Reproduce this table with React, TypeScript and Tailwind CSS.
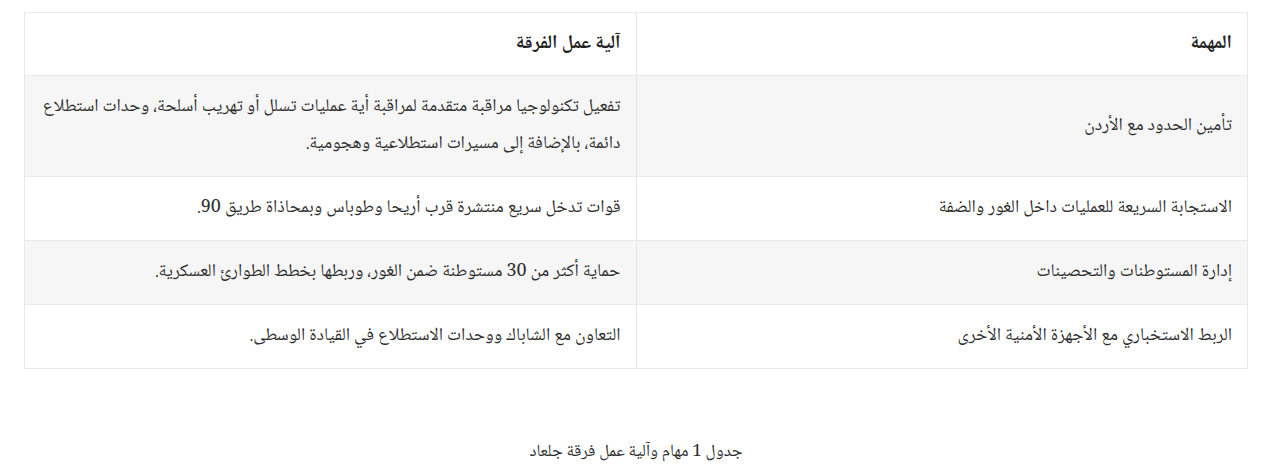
import React from "react";

interface Row {
  task: string;
  mechanism: string;
}

const rows: Row[] = [
  {
    task: "تأمين الحدود مع الأردن",
    mechanism:
      "تفعيل تكنولوجيا مراقبة متقدمة لمراقبة أية عمليات تسلل أو تهريب أسلحة، وحدات استطلاع دائمة، بالإضافة إلى مسيرات استطلاعية وهجومية.",
  },
  {
    task: "الاستجابة السريعة للعمليات داخل الغور والضفة",
    mechanism: "قوات تدخل سريع منتشرة قرب أريحا وطوباس وبمحاذاة طريق 90.",
  },
  {
    task: "إدارة المستوطنات والتحصينات",
    mechanism: "حماية أكثر من 30 مستوطنة ضمن الغور، وربطها بخطط الطوارئ العسكرية.",
  },
  {
    task: "الربط الاستخباري مع الأجهزة الأمنية الأخرى",
    mechanism: "التعاون مع الشاباك ووحدات الاستطلاع في القيادة الوسطى.",
  },
];

const App = () => {
  return (
    <div
      dir="rtl"
      className="min-h-[467px] bg-white pl-6 pr-8 pt-3 text-[#2e2e2e] font-['Noto_Naskh_Arabic','Noto_Sans_Arabic','DejaVu_Sans',serif]"
    >
      {/* Table */}
      <table className="w-full table-fixed border-collapse border border-[#e8e8e8] text-[18px]">
        <thead>
          <tr>
            <th className="w-1/2 border border-[#e8e8e8] px-[15px] py-[13px] text-right text-[19px] font-bold leading-[36px] text-[#222]">
              المهمة
            </th>
            <th className="w-1/2 border border-[#e8e8e8] px-[15px] py-[13px] text-right text-[19px] font-bold leading-[36px] text-[#222]">
              آلية عمل الفرقة
            </th>
          </tr>
        </thead>
        <tbody>
          {rows.map((row, i) => (
            <tr key={i} className={i % 2 === 0 ? "bg-[#f6f6f6]" : "bg-white"}>
              <td className="border border-[#e8e8e8] px-[15px] py-[13px] align-middle leading-[37px]">
                {row.task}
              </td>
              <td className="border border-[#e8e8e8] px-[15px] py-[13px] align-middle leading-[37px]">
                {row.mechanism}
              </td>
            </tr>
          ))}
        </tbody>
      </table>

      {/* Caption */}
      <p className="mt-[71px] text-center text-[17px] text-[#2e2e2e]">جدول 1 مهام وآلية عمل فرقة جلعاد</p>
    </div>
  );
};

export default App;
